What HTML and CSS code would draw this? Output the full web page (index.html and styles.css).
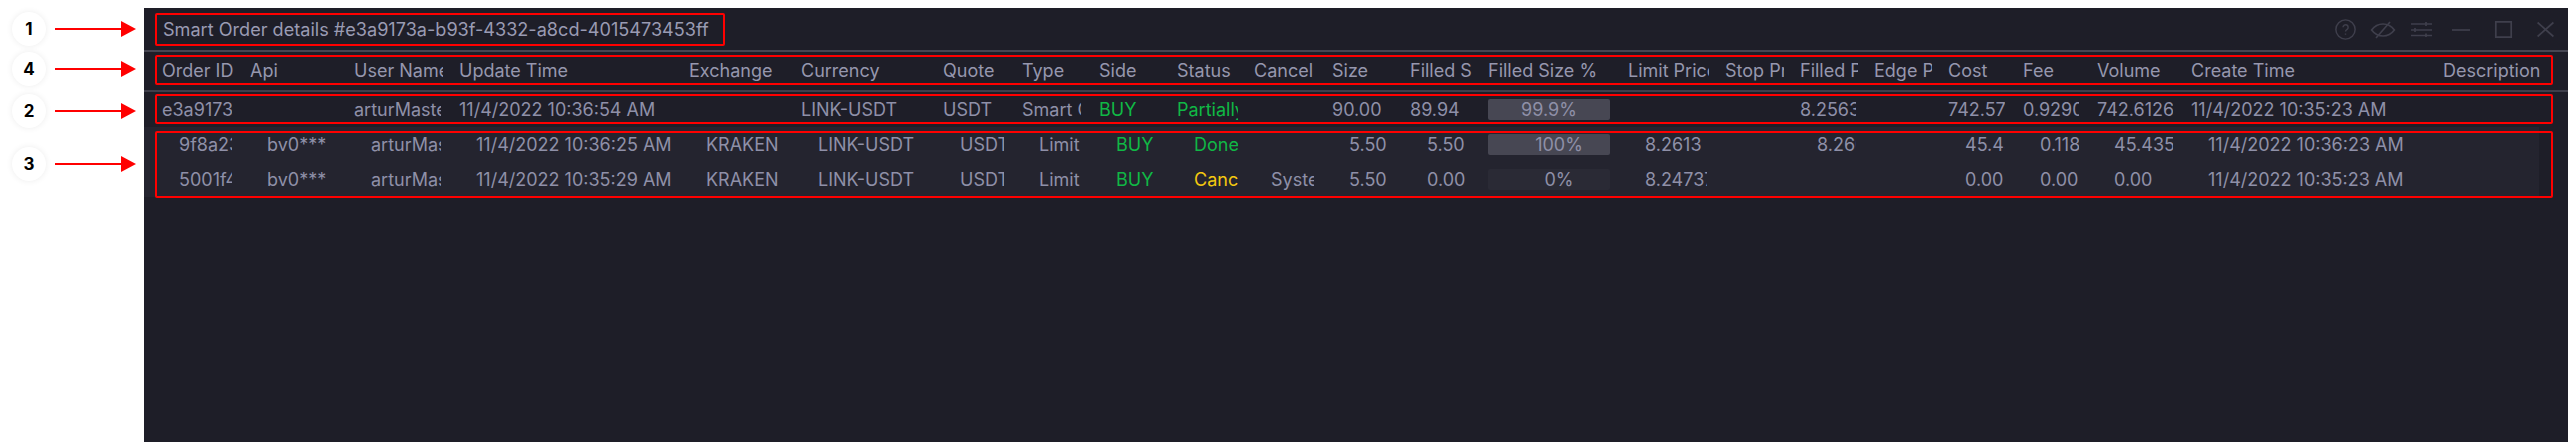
FILE: index.html
```html
<!DOCTYPE html>
<html lang="en">
<head>
<meta charset="utf-8">
<title>Smart Order details</title>
<link rel="stylesheet" href="styles.css">
</head>
<body>
<main class="window">
  <header class="titlebar">
    <div class="title">Smart Order details #e3a9173a-b93f-4332-a8cd-4015473453ff</div>
    <div class="controls">
      <svg class="ic ic-help" viewBox="0 0 24 24"><circle cx="12" cy="12" r="11"/><path d="M9.200 9.400a2.900 2.900 0 1 1 4.600 2.400c-1.100.8-1.800 1.300-1.800 2.600"/><path d="M12 16.600v1.400"/></svg>
      <svg class="ic ic-eye" viewBox="0 0 24 16"><path d="M.6 8c3-4 6.900-6 11.400-6s8.400 2 11.400 6c-3 4-6.900 6-11.400 6S3.600 12 .6 8z"/><path d="M5 16 19 0"/></svg>
      <svg class="ic ic-sliders" viewBox="0 0 21 15"><path d="M0 2h21M0 8h21M0 13.500h21M15 0v4M4 6v4M15 11.500v3.500"/></svg>
      <svg class="ic ic-min" viewBox="0 0 18 2"><path d="M0 1h18"/></svg>
      <svg class="ic ic-max" viewBox="0 0 17 17"><path d="M.8.8h15.400v15.400H.8z"/></svg>
      <svg class="ic ic-close" viewBox="0 0 17 15"><path d="M.6.500l15.800 14M16.400.500.6 14.500"/></svg>
    </div>
  </header>

  <section class="grid">
    <div class="row head">
      <div class="c">Order ID</div><div class="c">Api</div><div class="c">User Name</div><div class="c">Update Time</div><div class="c">Exchange</div><div class="c">Currency</div><div class="c">Quote</div><div class="c">Type</div><div class="c">Side</div><div class="c">Status</div><div class="c">Cancel By</div><div class="c">Size</div><div class="c">Filled Size</div><div class="c">Filled Size %</div><div class="c">Limit Price</div><div class="c">Stop Price</div><div class="c">Filled Price</div><div class="c">Edge Price</div><div class="c">Cost</div><div class="c">Fee</div><div class="c">Volume</div><div class="c">Create Time</div><div class="c end">Description</div>
    </div>
    <div class="row parent">
      <div class="c">e3a9173a</div><div class="c"></div><div class="c">arturMaster</div><div class="c">11/4/2022 10:36:54 AM</div><div class="c"></div><div class="c">LINK-USDT</div><div class="c">USDT</div><div class="c">Smart Order</div><div class="c buy">BUY</div><div class="c buy status">Partially Filled</div><div class="c"></div><div class="c">90.00</div><div class="c">89.94</div><div class="c flush"><div class="bar full">99.9%</div></div><div class="c"></div><div class="c"></div><div class="c">8.25630</div><div class="c"></div><div class="c">742.5740</div><div class="c">0.92900</div><div class="c">742.6126</div><div class="c">11/4/2022 10:35:23 AM</div><div class="c"></div>
    </div>
    <div class="children">
      <div class="row child">
        <div class="c">9f8a2398</div><div class="c">bv0***</div><div class="c">arturMaster</div><div class="c">11/4/2022 10:36:25 AM</div><div class="c">KRAKEN</div><div class="c">LINK-USDT</div><div class="c">USDT</div><div class="c">Limit</div><div class="c buy">BUY</div><div class="c buy status">Done</div><div class="c"></div><div class="c">5.50</div><div class="c">5.50</div><div class="c flush"><div class="bar full">100%</div></div><div class="c">8.2613</div><div class="c"></div><div class="c">8.2600</div><div class="c"></div><div class="c">45.43</div><div class="c">0.1180</div><div class="c">45.435</div><div class="c">11/4/2022 10:36:23 AM</div><div class="c"></div>
      </div>
      <div class="row child">
        <div class="c">5001f4a1</div><div class="c">bv0***</div><div class="c">arturMaster</div><div class="c">11/4/2022 10:35:29 AM</div><div class="c">KRAKEN</div><div class="c">LINK-USDT</div><div class="c">USDT</div><div class="c">Limit</div><div class="c buy">BUY</div><div class="c warn status">Canceled</div><div class="c">System</div><div class="c">5.50</div><div class="c">0.00</div><div class="c flush"><div class="bar none">0%</div></div><div class="c">8.24737</div><div class="c"></div><div class="c"></div><div class="c"></div><div class="c">0.00</div><div class="c">0.00</div><div class="c">0.00</div><div class="c">11/4/2022 10:35:23 AM</div><div class="c"></div>
      </div>
    </div>
  </section>
</main>

<div class="mark mark-title"></div>
<div class="mark mark-head"></div>
<div class="mark mark-parent"></div>
<div class="mark mark-children"></div>

<div class="callout call-1"><span class="num">1</span><span class="shaft"></span><span class="tip"></span></div>
<div class="callout call-4"><span class="num">4</span><span class="shaft"></span><span class="tip"></span></div>
<div class="callout call-2"><span class="num">2</span><span class="shaft"></span><span class="tip"></span></div>
<div class="callout call-3"><span class="num">3</span><span class="shaft"></span><span class="tip"></span></div>
</body>
</html>
```

FILE: styles.css
```css
* { box-sizing: border-box; }
html, body { margin: 0; height: 100%; background: #fff; overflow: hidden; }
body {
  padding: 8px 0 0 144px;
  font-family: Inter, "Liberation Sans", sans-serif;
  font-size: 18px;
  color: #8f90a8;
  position: relative;
}
.window { height: 434px; background: #1e1e28; display: flex; flex-direction: column; }

.titlebar {
  height: 44px;
  flex: none;
  display: flex;
  align-items: center;
  justify-content: space-between;
  padding: 0 14px 0 19px;
  border-bottom: 2px solid #474753;
}
.title { color: #9a9bb3; font-size: 18.1px; }
.controls { display: flex; align-items: center; height: 100%; padding-top: 1px; }
.ic { fill: none; stroke: #3f3f4c; stroke-width: 1.7; display: block; overflow: visible; }
.ic-help { width: 21px; height: 21px; margin-right: 15px; }
.ic-eye { width: 24px; height: 16px; margin-right: 16px; }
.ic-sliders { width: 21px; height: 15px; margin-right: 20px; }
.ic-min { width: 18px; height: 2px; margin-right: 25px; }
.ic-max { width: 17px; height: 17px; margin-right: 25px; }
.ic-close { width: 17px; height: 15px; }

.grid { width: 2395px; display: flex; flex-direction: column; }
.row {
  display: grid;
  grid-template-columns: 88px 104px 105px 230px 112px 142px 79px 77px 78px 77px 78px 78px 78px 140px 97px 75px 74px 74px 75px 74px 94px 252px 1fr;
  align-items: center;
  padding-left: 18px;
}
.c { white-space: nowrap; overflow: hidden; margin-right: 18px; line-height: 22px; min-height: 22px; }
.c.status { margin-right: 16px; }
.head { height: 38px; color: #9697ae; width: 2424px; }
.head .c { margin-right: 16px; }
.head .c.end { margin-right: 0; overflow: visible; }
.parent { height: 37px; border-top: 2px solid #3f3f4b; width: 2424px; }
.children { background: #24242f; height: 70px; display: flex; flex-direction: column; }
.child { height: 35px; }
.child .c { padding-left: 17px; }
.c.flush, .child .c.flush { padding-left: 0; margin-right: 0; }
.buy { color: #10b845; }
.warn { color: #f4c90f; }

.bar {
  width: 122px;
  height: 21px;
  line-height: 21px;
  text-align: center;
  border-radius: 2px;
}
.bar.full { background: #474753; }
.bar.none { background: #2a2a35; }
.child .bar { padding-left: 20px; }

.mark { position: absolute; border: 2px solid #f00; border-radius: 2px; left: 155px; right: 15px; }
.mark-title { top: 13px; height: 33px; right: auto; width: 570px; }
.mark-head { top: 55px; height: 30px; }
.mark-parent { top: 94px; height: 30px; }
.mark-children { top: 131px; height: 67px; }

.callout { position: absolute; left: 12px; width: 124px; height: 34px; display: flex; align-items: center; }
.call-1 { top: 12px; }
.call-4 { top: 52px; }
.call-2 { top: 94px; }
.call-3 { top: 147px; }
.num {
  width: 34px;
  height: 34px;
  flex: none;
  border-radius: 50%;
  background: #fff;
  box-shadow: 0 0 6px rgba(0,0,0,.08);
  color: #000;
  font-weight: 700;
  font-size: 17px;
  text-align: center;
  line-height: 34px;
}
.shaft { width: 66px; height: 2px; margin-left: 9px; background: #f00; flex: none; }
.tip {
  width: 0; height: 0; flex: none;
  border-left: 15px solid #f00;
  border-top: 8.5px solid transparent;
  border-bottom: 8.5px solid transparent;
}
```
